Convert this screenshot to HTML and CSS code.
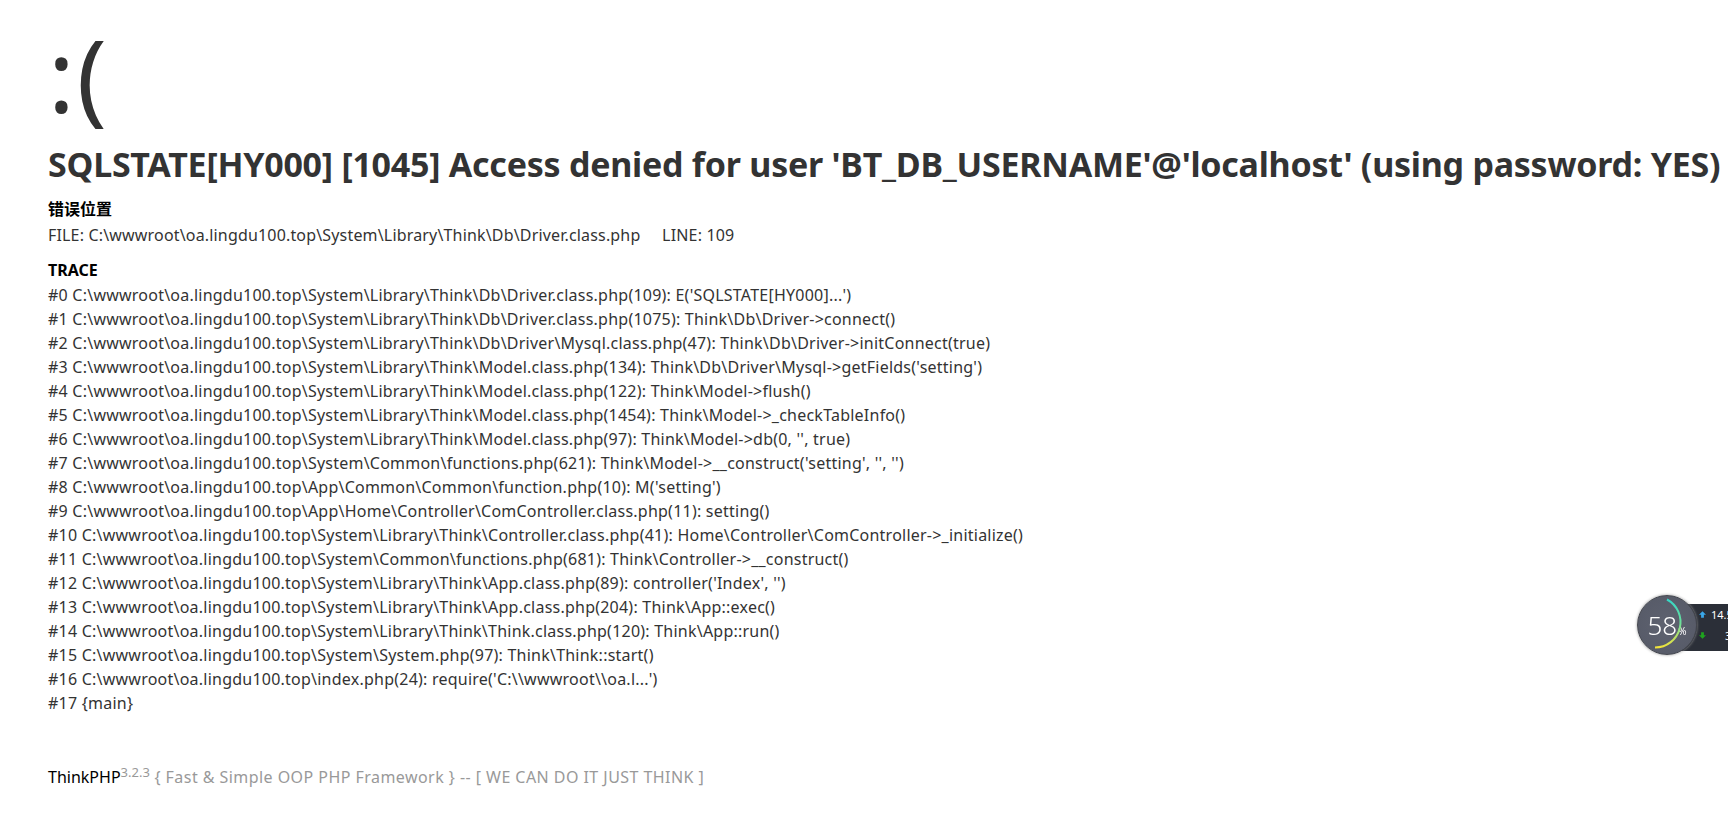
FILE: index.html
```html
<!DOCTYPE html>
<html lang="zh-CN">
<head>
<meta charset="utf-8">
<title>系统发生错误</title>
<link rel="stylesheet" href="styles.css">
</head>
<body>
<div class="error">
  <p class="face">:(</p>
  <h1 class="message">SQLSTATE[HY000] [1045] Access denied for user 'BT_DB_USERNAME'@'localhost' (using password: YES)</h1>
  <div class="content">
    <div class="info">
      <div class="title"><h3>错误位置</h3></div>
      <div class="text file"><p>FILE: C:\wwwroot\oa.lingdu100.top\System\Library\Think\Db\Driver.class.php &#160;&#160;&#160;&#160;LINE: 109</p></div>
    </div>
    <div class="info trace">
      <div class="title"><h3>TRACE</h3></div>
      <div class="text"><p>#0 C:\wwwroot\oa.lingdu100.top\System\Library\Think\Db\Driver.class.php(109): E('SQLSTATE[HY000]...')<br>
#1 C:\wwwroot\oa.lingdu100.top\System\Library\Think\Db\Driver.class.php(1075): Think\Db\Driver-&gt;connect()<br>
#2 C:\wwwroot\oa.lingdu100.top\System\Library\Think\Db\Driver\Mysql.class.php(47): Think\Db\Driver-&gt;initConnect(true)<br>
#3 C:\wwwroot\oa.lingdu100.top\System\Library\Think\Model.class.php(134): Think\Db\Driver\Mysql-&gt;getFields('setting')<br>
#4 C:\wwwroot\oa.lingdu100.top\System\Library\Think\Model.class.php(122): Think\Model-&gt;flush()<br>
#5 C:\wwwroot\oa.lingdu100.top\System\Library\Think\Model.class.php(1454): Think\Model-&gt;_checkTableInfo()<br>
#6 C:\wwwroot\oa.lingdu100.top\System\Library\Think\Model.class.php(97): Think\Model-&gt;db(0, '', true)<br>
#7 C:\wwwroot\oa.lingdu100.top\System\Common\functions.php(621): Think\Model-&gt;__construct('setting', '', '')<br>
#8 C:\wwwroot\oa.lingdu100.top\App\Common\Common\function.php(10): M('setting')<br>
#9 C:\wwwroot\oa.lingdu100.top\App\Home\Controller\ComController.class.php(11): setting()<br>
#10 C:\wwwroot\oa.lingdu100.top\System\Library\Think\Controller.class.php(41): Home\Controller\ComController-&gt;_initialize()<br>
#11 C:\wwwroot\oa.lingdu100.top\System\Common\functions.php(681): Think\Controller-&gt;__construct()<br>
#12 C:\wwwroot\oa.lingdu100.top\System\Library\Think\App.class.php(89): controller('Index', '')<br>
#13 C:\wwwroot\oa.lingdu100.top\System\Library\Think\App.class.php(204): Think\App::exec()<br>
#14 C:\wwwroot\oa.lingdu100.top\System\Library\Think\Think.class.php(120): Think\App::run()<br>
#15 C:\wwwroot\oa.lingdu100.top\System\System.php(97): Think\Think::start()<br>
#16 C:\wwwroot\oa.lingdu100.top\index.php(24): require('C:\\wwwroot\\oa.l...')<br>
#17 {main}</p></div>
    </div>
  </div>
</div>
<div class="copyright">
  <p><a href="#">ThinkPHP</a><sup>3.2.3</sup> { Fast &amp; Simple OOP PHP Framework } -- [ WE CAN DO IT JUST THINK ]</p>
</div>
<aside class="meter">
  <div class="meter-bar">
    <div class="meter-row"><svg class="arrow" viewBox="0 0 10 10"><path d="M5 .5 10 5.500H7V9.500H3V5.500H0Z" fill="#3aa7e8"/></svg><span>14.5</span></div>
    <div class="meter-row"><svg class="arrow" viewBox="0 0 10 10"><path d="M5 9.500 0 4.500H3V.5H7V4.500H10Z" fill="#1fa31f"/></svg><span class="down">3</span></div>
  </div>
  <div class="meter-dial">
    <svg class="meter-ring" viewBox="0 0 60 60">
      <defs><linearGradient id="ring" x1="0" y1="0" x2="0" y2="1"><stop offset="0" stop-color="#35d6c6"/><stop offset=".5" stop-color="#6fe09a"/><stop offset="1" stop-color="#f2e33a"/></linearGradient></defs>
      <path d="M30 4.500A25.500 25.500 0 0 1 18 52.500" fill="none" stroke="url(#ring)" stroke-width="2"/>
    </svg>
    <span class="meter-num">58</span><span class="meter-unit">%</span>
  </div>
</aside>
</body>
</html>
```
FILE: styles.css
```css
* { margin: 0; padding: 0; }
html, body { overflow: hidden; height: 100%; }
body { background: #fff; color: #333; font-family: "Noto Sans", "Noto Sans CJK SC", sans-serif; font-size: 16px; }
.error { padding: 14px 48px 24px; }
.face { font-size: 100px; font-weight: 400; line-height: 120px; margin-bottom: 12px; letter-spacing: 2px; }
.message { font-size: 34px; font-weight: 700; line-height: 40px; white-space: nowrap; letter-spacing: -.25px; margin: -2px 0 2px; }
.content { padding-top: 10px; }
.info { margin-bottom: 12px; }
.title { margin-bottom: 3px; }
.trace .title { margin-bottom: 2px; }
.title h3 { color: #000; font-size: 16px; font-weight: 700; }
.text { line-height: 24px; letter-spacing: .23px; }
.file { letter-spacing: .17px; }
.copyright { padding: 12px 48px; color: #999; letter-spacing: .45px; }
.copyright a { color: #000; text-decoration: none; letter-spacing: 0; }
.copyright sup { font-size: 13px; letter-spacing: 0; }
.meter { position: fixed; right: 0; top: 595px; width: 91px; height: 60px; }
.meter-bar { position: absolute; left: 30px; right: 0; top: 9px; height: 47px; box-sizing: border-box; background: #2b2f38; padding: 0 0 0 32px; color: #fff; font-size: 11px; overflow: hidden; }
.meter-row { display: flex; align-items: center; gap: 5px; height: 21px; white-space: nowrap; }
.arrow { width: 7px; height: 7px; flex: none; }
.down { margin-left: 14px; }
.meter-dial { position: absolute; left: 0; top: 0; width: 60px; height: 60px; box-sizing: border-box; border: 1px solid #44474f; border-radius: 50%; background: radial-gradient(circle, #5e6270 0%, #555966 100%); box-shadow: 0 0 3px #9a9a9a; color: #fff; display: flex; align-items: baseline; justify-content: center; line-height: 58px; }
.meter-ring { position: absolute; inset: -1px; }
.meter-num { font-size: 26px; font-weight: 300; }
.meter-unit { font-size: 10px; margin-left: 1px; }
```
